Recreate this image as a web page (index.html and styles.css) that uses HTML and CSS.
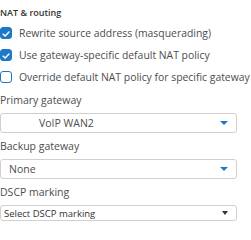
FILE: index.html
```html
<!DOCTYPE html>
<html>
<head>
<meta charset="utf-8">
<link rel="stylesheet" href="styles.css">
</head>
<body>
<div class="panel">
  <div class="section-title">NAT &amp; routing</div>
  <div class="checks">
    <label class="check"><span class="box on"><svg viewBox="0 0 12 12" width="12" height="12"><path d="M2.6 6.2 L5 8.5 L9.6 3.6" fill="none" stroke="#fff" stroke-width="1.8" stroke-linecap="round" stroke-linejoin="round"/></svg></span><span>Rewrite source address (masquerading)</span></label>
    <label class="check"><span class="box on"><svg viewBox="0 0 12 12" width="12" height="12"><path d="M2.6 6.2 L5 8.5 L9.6 3.6" fill="none" stroke="#fff" stroke-width="1.8" stroke-linecap="round" stroke-linejoin="round"/></svg></span><span>Use gateway-specific default NAT policy</span></label>
    <label class="check"><span class="box"></span><span>Override default NAT policy for specific gateway</span></label>
  </div>
  <div class="field first">
    <div class="label">Primary gateway</div>
    <div class="select big"><span class="val indent">VoIP WAN2</span><span class="caret blue"></span></div>
  </div>
  <div class="field">
    <div class="label">Backup gateway</div>
    <div class="select big"><span class="val">None</span><span class="caret blue"></span></div>
  </div>
  <div class="field">
    <div class="label">DSCP marking</div>
    <div class="select small"><span class="val">Select DSCP marking</span><span class="caret dark"></span></div>
  </div>
</div>
</body>
</html>
```
FILE: styles.css
```css
html, body {
  margin: 0;
  padding: 0;
  background: #fff;
}
body {
  font-family: "Open Sans", sans-serif;
  color: #4d4d4d;
}
.panel {
  width: 237px;
  padding-top: 7px;
}
.section-title {
  font-size: 9px;
  font-weight: 600;
  color: #333;
  line-height: 12px;
  height: 12px;
}
.checks {
  display: flex;
  flex-direction: column;
  gap: 10px;
  margin-top: 8px;
}
.check {
  display: flex;
  align-items: center;
  gap: 7px;
  font-size: 10.4px;
  line-height: 12px;
  white-space: nowrap;
}
.box {
  width: 12px;
  height: 12px;
  box-sizing: border-box;
  border: 1.2px solid #1e78c8;
  border-radius: 3px;
  flex: none;
  display: flex;
}
.box.on {
  background: #1e78c8;
}
.field {
  margin-top: 7px;
}
.field.first {
  margin-top: 11px;
}
.label {
  font-size: 10.5px;
  line-height: 12px;
  margin-bottom: 7px;
}
.select {
  border: 1px solid #d0d0d0;
  border-radius: 3px;
  display: flex;
  align-items: center;
  justify-content: space-between;
  box-sizing: border-box;
  font-size: 10.5px;
}
.select.big {
  height: 20px;
  padding: 0 8px;
}
.select.small {
  height: 16px;
  padding: 0 8px 0 3px;
  font-size: 9.5px;
  color: #333;
}
.val.indent {
  padding-left: 30px;
}
.caret {
  width: 0;
  height: 0;
  border-left: 4px solid transparent;
  border-right: 4px solid transparent;
  border-top: 4px solid #1e78c8;
}
.caret.dark {
  border-left-width: 3px;
  border-right-width: 3px;
  border-top-color: #333;
}
```
